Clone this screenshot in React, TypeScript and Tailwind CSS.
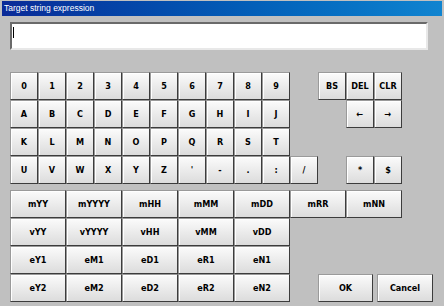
import React from "react";

const keyCls =
  "flex items-center justify-center h-[28px] border border-t-[#9a9a9a] border-l-[#9a9a9a] border-r-[#3c3c3c] border-b-[#3c3c3c] bg-gradient-to-b from-[#fbfbfb] to-[#dcdcdc] text-black font-bold text-[9px] leading-none shadow-[inset_1px_1px_0_#ffffff]";

function Key({ label, w = 28 }: { label: string; w?: number }) {
  return (
    <div className={keyCls} style={{ width: w }}>
      {label}
    </div>
  );
}

function Spacer({ w }: { w: number }) {
  return <div className="h-[28px] shrink-0" style={{ width: w }} />;
}

export default function App() {
  const r1 = ["0", "1", "2", "3", "4", "5", "6", "7", "8", "9"];
  const r2 = ["A", "B", "C", "D", "E", "F", "G", "H", "I", "J"];
  const r3 = ["K", "L", "M", "N", "O", "P", "Q", "R", "S", "T"];
  const r4 = ["U", "V", "W", "X", "Y", "Z", "'", "-", ".", ":", "/"];
  return (
    <div
      className="w-[444px] h-[306px] bg-[#c0c0c0] overflow-hidden flex flex-col px-[2px] pt-[1px]"
      style={{ fontFamily: '"DejaVu Sans Condensed", "DejaVu Sans", sans-serif' }}
    >
      <div
        className="h-[15px] w-[440px] bg-gradient-to-r from-[#0a2a98] to-[#1084d0] text-white text-[8.5px] leading-[15px] pl-[2px] font-normal"
        style={{ fontFamily: '"Liberation Sans", sans-serif' }}
      >
        Target string expression
      </div>
      <div className="ml-[8px] mt-[6px] w-[418px] h-[28px] bg-white border-2 border-t-[#6a6a6a] border-l-[#6a6a6a] border-r-[#e8e8e8] border-b-[#e8e8e8] relative">
        <div className="absolute left-[1px] top-[3px] w-[1px] h-[11px] bg-black" />
      </div>
      <div className="ml-[8px] mt-[22px] flex flex-col">
        <div className="flex">
          {r1.map((k) => (
            <Key key={k} label={k} />
          ))}
          <Spacer w={28} />
          <Key label="BS" />
          <Key label="DEL" />
          <Key label="CLR" />
        </div>
        <div className="flex">
          {r2.map((k) => (
            <Key key={k} label={k} />
          ))}
          <Spacer w={56} />
          <Key label="←" />
          <Key label="→" />
        </div>
        <div className="flex">
          {r3.map((k) => (
            <Key key={k} label={k} />
          ))}
        </div>
        <div className="flex">
          {r4.map((k) => (
            <Key key={k} label={k} />
          ))}
          <Spacer w={28} />
          <Key label="*" />
          <Key label="$" />
        </div>
        <div className="flex mt-[6px]">
          {["mYY", "mYYYY", "mHH", "mMM", "mDD", "mRR", "mNN"].map((k) => (
            <Key key={k} label={k} w={56} />
          ))}
        </div>
        <div className="flex">
          {["vYY", "vYYYY", "vHH", "vMM", "vDD"].map((k) => (
            <Key key={k} label={k} w={56} />
          ))}
        </div>
        <div className="flex">
          {["eY1", "eM1", "eD1", "eR1", "eN1"].map((k) => (
            <Key key={k} label={k} w={56} />
          ))}
        </div>
        <div className="flex">
          {["eY2", "eM2", "eD2", "eR2", "eN2"].map((k) => (
            <Key key={k} label={k} w={56} />
          ))}
          <div className="w-[28px]" />
          <Key label="OK" w={55} />
          <div className="w-[4px]" />
          <Key label="Cancel" w={56} />
        </div>
      </div>
    </div>
  );
}
